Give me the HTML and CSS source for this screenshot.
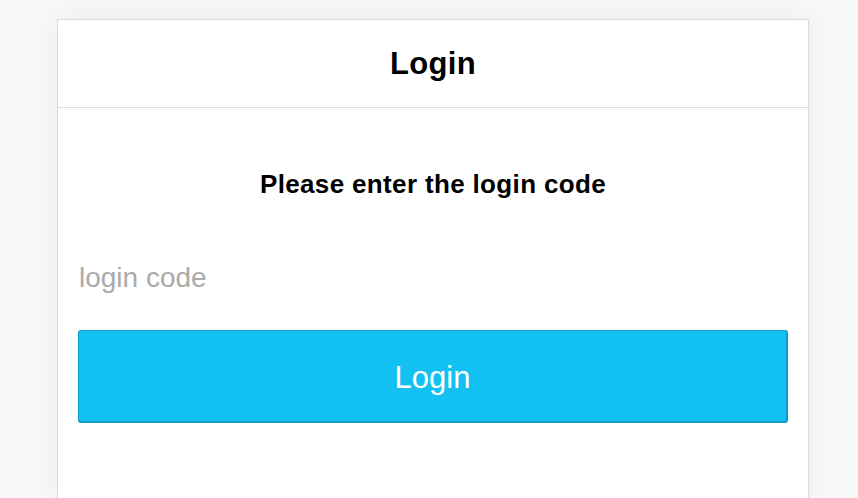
FILE: index.html
```html
<!DOCTYPE html>
<html>
<head>
<meta charset="utf-8">
<title>Login</title>
<link rel="stylesheet" href="styles.css">
</head>
<body>
<div class="page">
  <div class="card">
    <div class="card-header">
      <h1 class="title">Login</h1>
    </div>
    <div class="card-body">
      <p class="prompt">Please enter the login code</p>
      <input class="code-input" type="text" placeholder="login code">
      <button class="login-btn" type="button">Login</button>
    </div>
  </div>
</div>
</body>
</html>
```

FILE: styles.css
```css
html, body {
  margin: 0;
  padding: 0;
  height: 100%;
  overflow: hidden;
}
body {
  background: #f8f8f8;
  font-family: "Liberation Sans", Arial, Helvetica, sans-serif;
  color: #000;
}
.page {
  padding: 19px 0 0 57px;
}
.card {
  width: 752px;
  height: 479px;
  box-sizing: border-box;
  background: #fff;
  border: 1px solid #dcdcdc;
  border-bottom: none;
  box-shadow: 0 0 30px rgba(0, 0, 0, 0.06);
}
.card-header {
  height: 87px;
  border-bottom: 1px solid #dddddd;
  display: flex;
  align-items: center;
  justify-content: center;
}
.title {
  margin: 0;
  font-size: 31px;
  font-weight: bold;
  line-height: 87px;
  letter-spacing: 0.3px;
}
.card-body {
  padding: 61px 20px 0;
  display: flex;
  flex-direction: column;
}
.prompt {
  margin: 0;
  font-size: 26px;
  font-weight: bold;
  line-height: 30px;
  letter-spacing: 0.35px;
  text-align: center;
}
.code-input {
  margin-top: 49px;
  height: 60px;
  padding: 0 0 0 1px;
  border: none;
  outline: none;
  font-family: inherit;
  font-size: 28px;
  color: #333;
  background: transparent;
}
.code-input::placeholder {
  color: #aaaaaa;
}
.login-btn {
  margin-top: 22px;
  height: 93px;
  width: 100%;
  box-sizing: border-box;
  background: #13c0f2;
  border: 1px solid #0c9fcd;
  border-width: 1px 2px 2px 1px;
  border-radius: 3px;
  color: #fff;
  font-family: inherit;
  font-size: 31px;
  padding: 4px 0 0;
}
```
